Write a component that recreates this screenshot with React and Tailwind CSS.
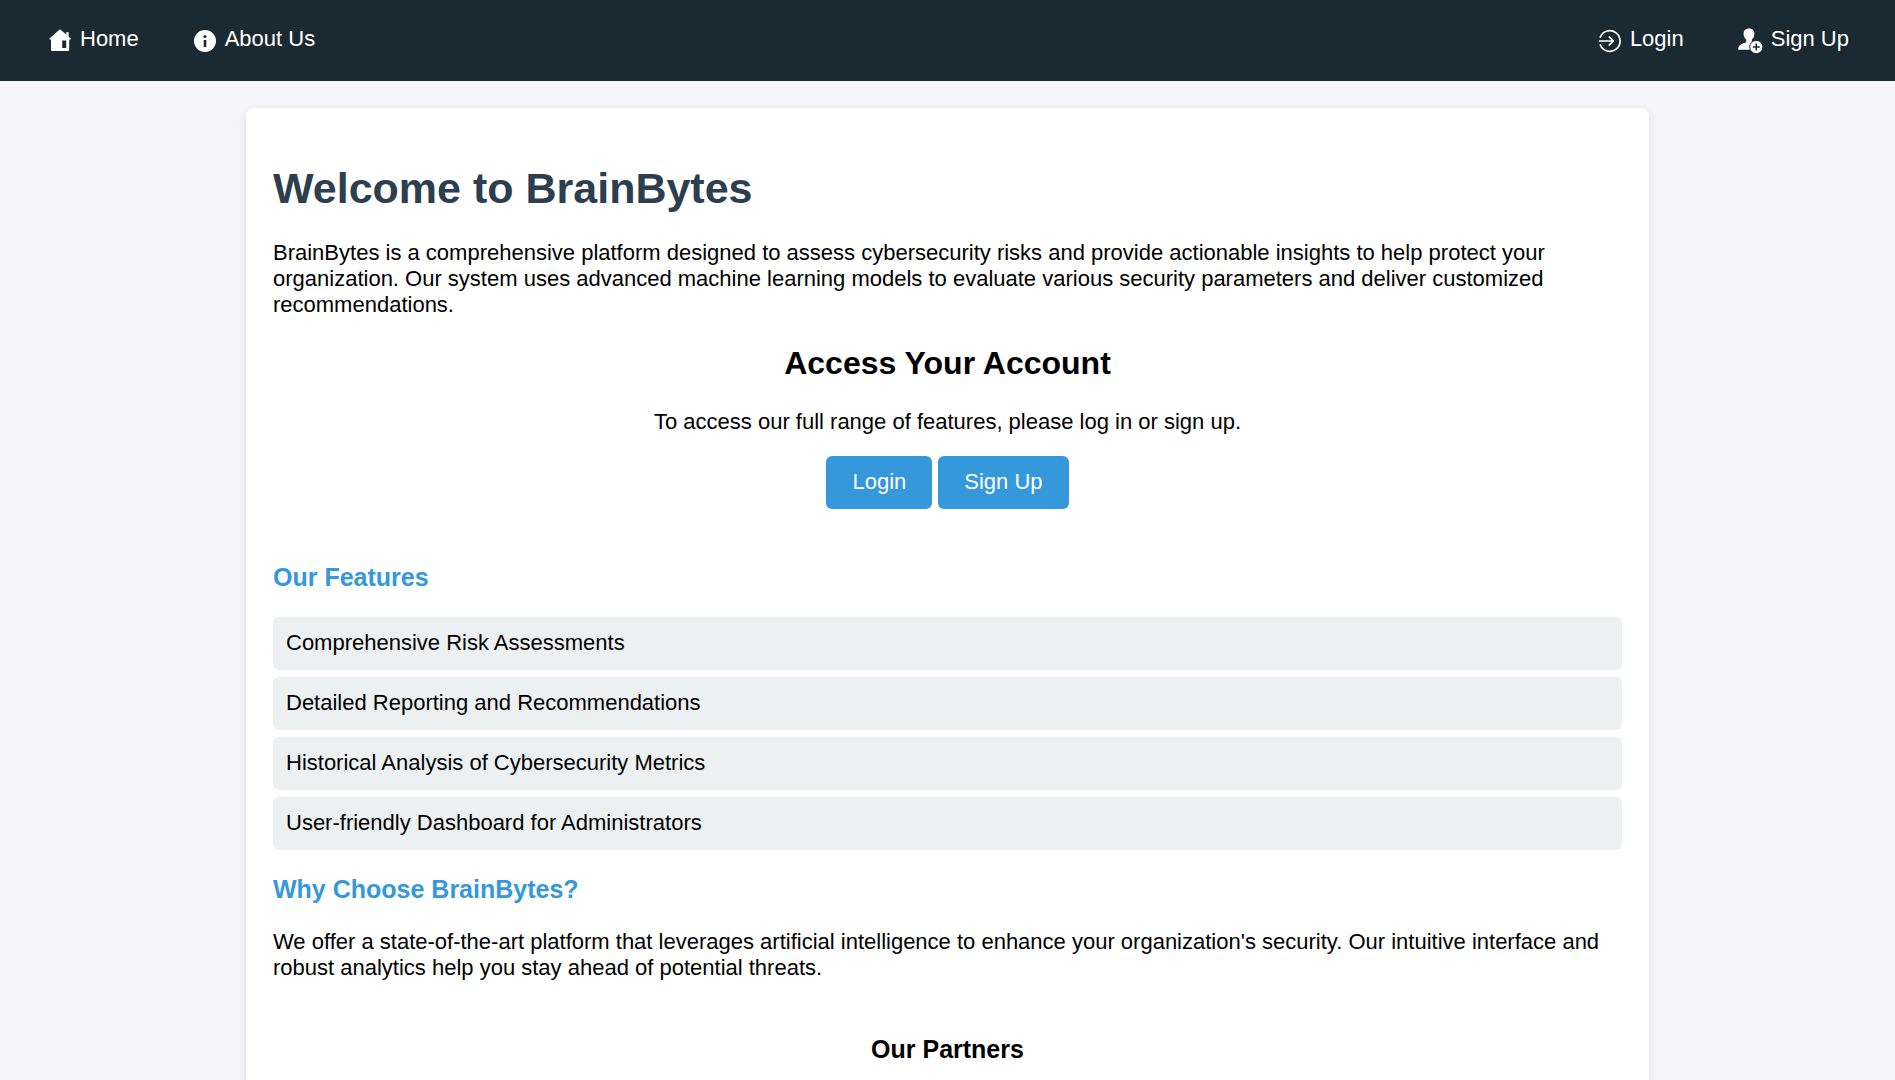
const features = [
  "Comprehensive Risk Assessments",
  "Detailed Reporting and Recommendations",
  "Historical Analysis of Cybersecurity Metrics",
  "User-friendly Dashboard for Administrators",
];

function HomeIcon() {
  return (
    <svg className="h-6 w-6" viewBox="0 0.8 24 24" fill="white" aria-hidden="true">
      <path
        fillRule="evenodd"
        d="M12 1 18.3 6.3V4.4Q18.3 3.8 18.9 3.8H20Q20.6 3.8 20.6 4.4V8.3L22.8 10.2Q23.1 11 22.3 11.2H21.2V21.6Q21.2 22.8 20 22.8H4.2Q3 22.8 3 21.6V11.2H1.8Q1 11 1.4 10.2ZM14.2 12.2V19.8H18.2V12.2Z"
      />
    </svg>
  );
}

function InfoIcon() {
  return (
    <svg className="h-6 w-6" viewBox="0 0 24 24" aria-hidden="true">
      <circle cx="12" cy="12" r="11" fill="white" />
      <circle cx="12" cy="7.5" r="1.5" fill="#1b2a32" />
      <path d="M10.7 11H13.3V18H10.7Z" fill="#1b2a32" />
    </svg>
  );
}

function LoginIcon() {
  return (
    <svg
      className="h-6 w-6"
      viewBox="0 0 24 24"
      fill="none"
      stroke="white"
      strokeWidth="1.7"
      strokeLinecap="round"
      strokeLinejoin="round"
      aria-hidden="true"
    >
      <path d="M2.3 8A10.3 10.3 0 1 1 2.3 16M1.7 12H15.3M11.3 8 15.3 12 11.3 16" />
    </svg>
  );
}

function SignUpIcon() {
  return (
    <svg className="h-[27px] w-[25px]" viewBox="1 0 25 27" aria-hidden="true">
      <path
        fill="white"
        d="M12 1.5C15.5 1.5 17.4 3.6 17.4 6.8 17.4 9.6 16.2 11.4 14.8 12.8V15.2L17 16.4 15.5 22.8H1.2C1.2 18.5 3 17.6 9.2 15.2V12.8C7.7 11.4 6.6 9.6 6.6 6.8 6.6 3.6 8.5 1.5 12 1.5Z"
      />
      <circle cx="19.3" cy="20" r="6.6" fill="white" stroke="#1b2a32" strokeWidth="1" />
      <path d="M19.3 16.5V23.5M15.8 20H22.8" stroke="#1b2a32" strokeWidth="1.6" />
    </svg>
  );
}

function NavLink({ icon, children }) {
  return (
    <a href="#" className="flex items-center gap-2 px-[27px] text-white">
      {icon}
      <span className="-mt-[3px]">{children}</span>
    </a>
  );
}

function Button({ children }) {
  return (
    <button type="button" className="rounded-md bg-[#3498db] px-[26px] pt-[13px] pb-[14px] text-white">
      {children}
    </button>
  );
}

export default function App() {
  return (
    <div className="min-h-screen bg-[#f4f4f9] font-['Liberation_Sans',Arial,sans-serif] text-[22px] leading-[26px] text-black">
      <nav className="flex h-[81px] items-center justify-between bg-[#1b2a32] pr-[19px] pl-[21px]">
        <div className="flex">
          <NavLink icon={<HomeIcon />}>Home</NavLink>
          <NavLink icon={<InfoIcon />}>About Us</NavLink>
        </div>
        <div className="flex">
          <NavLink icon={<LoginIcon />}>Login</NavLink>
          <NavLink icon={<SignUpIcon />}>Sign Up</NavLink>
        </div>
      </nav>
      <main className="mx-auto mt-[27px] max-w-[1403px] rounded-lg bg-white px-[27px] pt-[55px] pb-20 shadow-[0_3px_8px_rgba(0,0,0,0.1)]">
        <h1 className="text-[43px] leading-[50px] font-bold text-[#2c3e50]">Welcome to BrainBytes</h1>
        <p className="mt-[27px]">
          BrainBytes is a comprehensive platform designed to assess cybersecurity risks and provide
          actionable insights to help protect your organization. Our system uses advanced machine
          learning models to evaluate various security parameters and deliver customized
          recommendations.
        </p>
        <section className="mt-[26px] text-center">
          <h2 className="text-[32px] leading-[38px] font-bold">Access Your Account</h2>
          <p className="mt-[27px]">To access our full range of features, please log in or sign up.</p>
          <div className="mt-[21px] flex justify-center gap-[6px]">
            <Button>Login</Button>
            <Button>Sign Up</Button>
          </div>
        </section>
        <section className="mt-[53px]">
          <h3 className="text-[25px] leading-[30px] font-bold text-[#3498db]">Our Features</h3>
          <ul className="mt-[25px] grid gap-[7px]">
            {features.map((feature) => (
              <li key={feature} className="rounded-md bg-[#ecf0f1] px-[13px] pt-[13px] pb-[14px]">
                {feature}
              </li>
            ))}
          </ul>
        </section>
        <section className="mt-[24px]">
          <h3 className="text-[25px] leading-[30px] font-bold text-[#3498db]">Why Choose BrainBytes?</h3>
          <p className="mt-[25px]">
            We offer a state-of-the-art platform that leverages artificial intelligence to enhance
            your organization's security. Our intuitive interface and robust analytics help you stay
            ahead of potential threats.
          </p>
        </section>
        <section className="mt-[53px] text-center">
          <h3 className="text-[25px] leading-[30px] font-bold">Our Partners</h3>
        </section>
      </main>
    </div>
  );
}
